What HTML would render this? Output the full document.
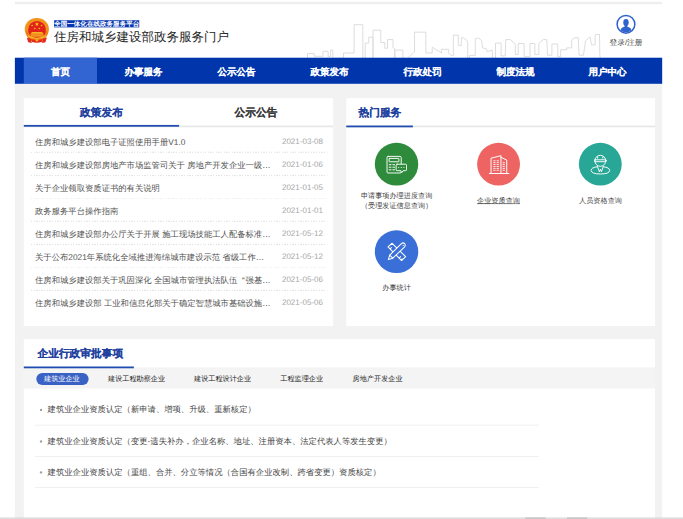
<!DOCTYPE html>
<html><head><meta charset="utf-8">
<style>
*{margin:0;padding:0;box-sizing:border-box}
html,body{width:683px;height:519px;overflow:hidden;background:#fff;font-family:"Liberation Sans",sans-serif;text-rendering:geometricPrecision}
.a{position:absolute}
#topbar{left:25.212px;top:3.362px;width:1087.49px;height:3.362px;background:#eeeeee}
#label{left:90.764px;top:33.616px;width:143.71px;height:12.438px;background:#0636b0;color:#fff;font-size:11px;line-height:12.942px;font-weight:bold;letter-spacing:0.067px;white-space:nowrap;text-align:center;letter-spacing:0}
#title{left:90.764px;top:50.425px;font-size:21px;line-height:26.893px;color:#262626;white-space:nowrap}
#login{left:1016.896px;top:62.863px;width:70.594px;text-align:center;font-size:13px;line-height:15.127px;color:#444;white-space:nowrap}
#nav{left:25.212px;top:97.488px;width:1087.49px;height:43.701px;background:#0035ac}
#nav .it{position:absolute;top:0;height:43.701px;line-height:49.08px;color:#fff;font-weight:bold;-webkit-text-stroke:0.168px #fff;font-size:16px;white-space:nowrap;text-align:center}
#nav .act{background:#3264d2}
#body{left:25.212px;top:141.189px;width:1087.49px;height:729.476px;background:#f2f2f2}
.panel{background:#fff}
.tabt{font-size:18px;font-weight:bold;-webkit-text-stroke:0.202px currentColor;white-space:nowrap;line-height:23.531px}
.row{position:absolute;left:58.829px;width:490.799px;height:38.659px;font-size:14px;line-height:42.357px;color:#505050;white-space:nowrap}
.row .t{position:absolute;left:0;top:0}
.q{display:inline-block;width:14.001px;text-align:right;padding-right:1.345px}
.row .d{position:absolute;right:6.723px;top:-0.336px;color:#a8a8a8;font-size:13.5px}
.dash{position:absolute;left:52.105px;width:497.523px;height:1.681px;background:repeating-linear-gradient(90deg,#e4e4e4 0 2.219px,transparent 2.219px 4.437px)}
.circ{position:absolute;width:72.275px;height:72.275px;border-radius:50%}
.lab{position:absolute;width:171.444px;text-align:center;font-size:12px;line-height:16.808px;color:#3a3a3a;white-space:nowrap}
.sub{position:absolute;top:621.063px;height:33.616px;line-height:33.616px;font-size:12px;color:#222;white-space:nowrap}
.brow{position:absolute;left:58.829px;width:847.133px;height:52.946px;font-size:14px;line-height:52.946px;color:#444;white-space:nowrap;padding-left:21.178px;border-bottom:1.681px solid #e6e6e6}
.brow:before{content:"";position:absolute;left:8.404px;top:24.54px;width:4.034px;height:4.034px;border-radius:50%;background:#a0a0a0}
#bline{left:0;top:869.992px;width:1148px;height:2.353px;background:#c8cac8}
</style></head><body>
<div id="page" style="position:absolute;left:0;top:0;width:1148.000px;height:872.346px;transform:scale(0.594948);transform-origin:0 0;overflow:hidden">
<div class="a" id="topbar"></div>
<!-- emblem -->
<svg class="a" style="left:33.616px;top:23.531px;width:57.148px;height:57.148px" viewBox="20 14 34 34">
  <ellipse cx="36.6" cy="29" rx="12.1" ry="11.2" fill="#f2941c"/>
  <path d="M25.5 31 Q26 38 31 40.5 L36.6 41 L42.2 40.5 Q47.2 38 47.7 31 Z" fill="#ef7d18"/>
  <circle cx="36.8" cy="29.6" r="8.9" fill="#e2231a"/>
  <path d="M31.6 31.6H42L42.8 33.2H30.8Z" fill="#f6b623"/>
  <rect x="30.4" y="33" width="12.8" height="3.4" fill="#f6b623"/>
  <path d="M30.6 34.2H43M30.6 35.5H43" stroke="#e6531c" stroke-width="0.45"/>
  <path d="M27.6 35.6Q36.7 40.6 45.8 35.6" fill="none" stroke="#f6b623" stroke-width="1.3"/>
  <path d="M26.6 37.4L30.6 38.4L31.6 42.6L28 42Z" fill="#e42a1c"/>
  <path d="M46.6 37.4L42.6 38.4L41.6 42.6L45.2 42Z" fill="#e42a1c"/>
  <path d="M30.8 38.6Q36.7 40.6 42.4 38.6L41.6 41.8Q36.7 43 31.8 41.8Z" fill="#e42a1c"/>
  <circle cx="36.7" cy="40" r="1.3" fill="#f4b21e"/>
  <polygon points="36.7,21.8 37.25,23.3 38.8,23.3 37.55,24.2 38.05,25.7 36.7,24.8 35.35,25.7 35.85,24.2 34.6,23.3 36.15,23.3" fill="#ffd51c"/>
  <circle cx="31.9" cy="25.2" r="0.75" fill="#ffd51c"/>
  <circle cx="41.3" cy="25.2" r="0.75" fill="#ffd51c"/>
  <circle cx="34.6" cy="28.1" r="0.75" fill="#ffd51c"/>
  <circle cx="39" cy="28.1" r="0.75" fill="#ffd51c"/>
</svg>
<div class="a" id="label">全国一体化在线政务服务平台</div>
<div class="a" id="title">住房和城乡建设部政务服务门户</div>
<!-- skyline -->
<svg class="a" style="left:470.63px;top:25.212px;width:554.671px;height:73.956px" viewBox="280 15 330 44">
<polyline fill="none" stroke="#d9d9d9" stroke-width="0.9" points="307.3,58.5 307.3,53.7 314,53.7 314,56.4 322.8,56.4 322.8,51.4 327.9,51.4 327.9,56.6 330.4,56.6 330.4,50.2 332.6,50.2 332.6,58.5 343.3,58.5 343.3,53.1 353.9,53.1 353.9,24.8 362.6,24.8 362.6,58.5 365,58.5 365,43.2 368.5,43.2 368.5,37.3 372.8,37.3 372.8,58.5 372.8,30.3 380.5,30.3 380.5,42.6 384.6,42.6 384.6,48.4 387.3,48.4 387.3,39.7 392.8,39.7 392.8,47.9 394.6,49 394.6,58.5 394.6,50.2 402.6,50.2 402.6,58.5 407.5,58.5 414.3,52 414.3,32.3 425.6,32.3 425.6,53.1 432,53.1 432,47.3 441.4,53.1 441.2,49.4 448.2,49.4 448.2,53.1 451.1,55.5 453.1,55.5 453.1,35.3 458.1,35.3 458.1,45.5 461.1,45.5 461.1,37.9 463.4,37.9 467.5,41.4 467.5,58.5 469.2,58.5 469.2,55.5 475.1,55.5 475.1,38.5 478.6,38.5 481.6,40.8 482.2,47.9 486.3,49 486.8,52 492.1,50.2 492.1,58.5 495.3,58.5 495.3,43.2 500.9,43.2 500.9,56 505,56 505.6,39.7 510.3,39.7 515.1,44.4 515.1,54.6 518,54.6 518,43.6 523.9,43.6 523.9,56.8 529.8,56.8 529.8,43.6 534.6,43.6 534.6,54.6 538.6,54.6 538.6,43.6 543,39.7 546.6,39.7 547.3,55.3 551.7,55.3 551.7,44.1 557.6,44.1 557.6,56.8 560.5,56.8 560.5,49.9 566.4,49.9 566.4,48 571.5,48 571.5,40 574.4,37.8 578.1,37.8 578.8,55.3 583.2,55.3 585.4,40.7 589.8,37 591.3,45 594.9,45 594.9,34.8 599.3,34.4 599.6,54.6 600,58.5"/>
</svg>
<!-- login icon -->
<svg class="a" style="left:1035.385px;top:21.851px;width:33.616px;height:36.978px" viewBox="0 0 20 22">
  <defs><clipPath id="cp"><circle cx="10.2" cy="11.2" r="8.2"/></clipPath></defs>
  <circle cx="10.2" cy="11.2" r="8.9" fill="none" stroke="#2f62cc" stroke-width="1.5"/>
  <g clip-path="url(#cp)" fill="#2f62cc">
    <ellipse cx="10.2" cy="9.3" rx="2.7" ry="3.5"/>
    <rect x="8.9" y="11" width="2.6" height="3"/>
    <path d="M3.5 21 Q4.2 14.6 8.4 13.6 L12 13.6 Q16.2 14.6 16.9 21 Z"/>
  </g>
</svg>
<div class="a" id="login">登录/注册</div>
<div class="a" id="nav">
  <div class="it act" style="left:15.127px;width:122.7px">首页</div>
  <div class="it" style="left:137.827px;width:156.316px">办事服务</div>
  <div class="it" style="left:294.143px;width:156.316px">公示公告</div>
  <div class="it" style="left:450.46px;width:156.316px">政策发布</div>
  <div class="it" style="left:606.776px;width:156.316px">行政处罚</div>
  <div class="it" style="left:763.092px;width:156.316px">制度法规</div>
  <div class="it" style="left:917.728px;width:156.316px">用户中心</div>
</div>
<div class="a" id="body"></div>
<!-- left panel -->
<div class="a panel" style="left:40.34px;top:164.72px;width:519.373px;height:383.227px"></div>
<div class="a tabt" style="left:40.34px;top:178.167px;width:260.527px;text-align:center;color:#1d3f9e">政策发布</div>
<div class="a tabt" style="left:300.867px;top:178.167px;width:258.846px;text-align:center;color:#3a3a3a">公示公告</div>
<div class="a" style="left:40.34px;top:211.447px;width:519.373px;height:2.353px;background:#e8e8e8"></div>
<div class="a" style="left:40.34px;top:210.102px;width:260.527px;height:3.362px;background:#1f4db0"></div>
<div class="row" style="top:217.666px"><span class="t">住房和城乡建设部电子证照使用手册V1.0</span><span class="d">2021-03-08</span></div>
<div class="dash" style="top:255.485px"></div>
<div class="row" style="top:256.325px"><span class="t">住房和城乡建设部房地产市场监管司关于 房地产开发企业一级…</span><span class="d">2021-01-06</span></div>
<div class="dash" style="top:294.143px"></div>
<div class="row" style="top:294.984px"><span class="t">关于企业领取资质证书的有关说明</span><span class="d">2021-01-05</span></div>
<div class="dash" style="top:332.802px"></div>
<div class="row" style="top:333.643px"><span class="t">政务服务平台操作指南</span><span class="d">2021-01-01</span></div>
<div class="dash" style="top:371.461px"></div>
<div class="row" style="top:372.302px"><span class="t">住房和城乡建设部办公厅关于开展 施工现场技能工人配备标准…</span><span class="d">2021-05-12</span></div>
<div class="dash" style="top:410.12px"></div>
<div class="row" style="top:410.96px"><span class="t">关于公布2021年系统化全域推进海绵城市建设示范 省级工作…</span><span class="d">2021-05-12</span></div>
<div class="dash" style="top:448.779px"></div>
<div class="row" style="top:449.619px"><span class="t">住房和城乡建设部关于巩固深化 全国城市管理执法队伍<span class="q">“</span>强基…</span><span class="d">2021-05-06</span></div>
<div class="dash" style="top:487.438px"></div>
<div class="row" style="top:488.278px"><span class="t">住房和城乡建设部 工业和信息化部关于确定智慧城市基础设施…</span><span class="d">2021-05-06</span></div>
<!-- right panel -->
<div class="a panel" style="left:581.564px;top:164.72px;width:519.373px;height:383.227px"></div>
<div class="a tabt" style="left:602.574px;top:178.167px;color:#1d3f9e">热门服务</div>
<div class="a" style="left:581.564px;top:211.447px;width:519.373px;height:2.353px;background:#e8e8e8"></div>
<div class="a" style="left:581.564px;top:210.943px;width:112.615px;height:3.362px;background:#1f4db0"></div>
<div class="circ" style="left:630.476px;top:240.021px;background:#2e8b3b"></div>
<div class="circ" style="left:801.751px;top:240.189px;background:#ee6463"></div>
<div class="circ" style="left:973.195px;top:240.189px;background:#28a797"></div>
<div class="circ" style="left:630.476px;top:386.757px;background:#3a6fd8"></div>
<svg class="a" style="left:630.307px;top:238.676px;width:73.956px;height:73.956px" viewBox="375 142 44 44">
 <g fill="none" stroke="#fff" stroke-width="0.95" stroke-linecap="round">
  <rect x="387.2" y="156.2" width="14.2" height="16.6" rx="1.1"/>
  <rect x="389.3" y="158.2" width="9.8" height="3.4" rx="0.4"/>
  <path d="M389.4 164.5H391.2M393 164.5H394.8M389.4 167H391.2M393 167H394.8M389.4 169.6H391.2M393 169.6H394.8"/>
  <path d="M397.3 164H405.7Q406.7 164 406.7 165V169.5Q406.7 170.5 405.7 170.5H403.2L402 172.4L401 170.5H397.3Q396.3 170.5 396.3 169.5V165Q396.3 164 397.3 164Z" fill="#2e8b3b"/>
 </g>
 <g fill="#fff"><circle cx="398.9" cy="167.3" r="0.55"/><circle cx="401.5" cy="167.3" r="0.55"/><circle cx="404.1" cy="167.3" r="0.55"/></g>
</svg>
<svg class="a" style="left:801.751px;top:238.676px;width:73.956px;height:73.956px" viewBox="477 142 44 44">
 <g fill="none" stroke="#fff" stroke-width="1" stroke-linecap="round" stroke-linejoin="round">
  <path d="M490.9 173.3V158L500.8 155.5V173.3M500.8 157.1L506.6 159.9V173.3M489.2 173.3H508.7"/>
  <path stroke-width="0.9" d="M493.6 160.6H495M496.9 160.6H498.3M493.6 162.5H495M496.9 162.5H498.3M493.6 164.4H495M496.9 164.4H498.3M493.6 166.3H495M496.9 166.3H498.3M493.6 168.2H495M496.9 168.2H498.3M493.6 170.1H495M496.9 170.1H498.3M502.9 162.5H504.3M502.9 164.4H504.3M502.9 166.3H504.3M502.9 168.2H504.3M502.9 170.1H504.3"/>
 </g>
</svg>
<svg class="a" style="left:973.195px;top:238.676px;width:73.956px;height:73.956px" viewBox="579 142 44 44">
 <g fill="none" stroke="#fff" stroke-width="0.95" stroke-linecap="round" stroke-linejoin="round">
  <circle cx="600.5" cy="160.6" r="5.5"/>
  <rect x="594.8" y="159.6" width="11.4" height="1.9" rx="0.4"/>
  <path d="M597.8 156.6V158M602.9 156.6V158"/>
  <path d="M597.6 166.5Q591.2 167.3 591.2 170.2Q591.5 173.8 600.5 173.8Q609.5 173.8 609.8 170.2Q609.8 167.3 603.4 166.5"/>
  <path d="M597.6 166.5L599.5 171.6L600.5 169L601.5 171.6L603.4 166.5"/>
 </g>
</svg>
<svg class="a" style="left:630.307px;top:384.908px;width:73.956px;height:73.956px" viewBox="375 229 44 44">
 <g fill="none" stroke="#fff" stroke-width="1.05" stroke-linejoin="round" stroke-linecap="round">
  <path d="M388.2 246.9L392.3 243.2L405.8 256.6L401.8 260.5Z"/>
  <path d="M390.5 248.6L391.6 247.5M399.6 257.7L400.7 256.6M401.6 259.6L402.3 258.9"/>
  <path d="M401.6 243.6L389.9 255L388.5 259.5L393 258.1L404.8 246.8A2.25 2.25 0 0 0 401.6 243.6Z" fill="#3a6fd8"/>
  <path d="M389.9 255L393 258.1"/>
 </g>
 <circle cx="403.4" cy="245.4" r="0.6" fill="#fff"/>
</svg>
<div class="lab" style="left:580.891px;top:320.196px">申请事项办理进度查询<br>（受理发证信息查询）</div>
<div class="lab" style="left:752.167px;top:328.6px"><u>企业资质查询</u></div>
<div class="lab" style="left:923.611px;top:328.6px">人员资格查询</div>
<div class="lab" style="left:580.891px;top:475.336px">办事统计</div>
<!-- bottom panel -->
<div class="a panel" style="left:40.34px;top:569.798px;width:1060.597px;height:302.548px"></div>
<div class="a tabt" style="left:63.031px;top:583.245px;color:#1d3f9e">企业行政审批事项</div>
<div class="a" style="left:40.34px;top:618.542px;width:1060.597px;height:34.457px;background:#f4f4f4"></div>
<div class="a" style="left:40.34px;top:617.533px;width:1060.597px;height:1.681px;background:#e8e8e8"></div>
<div class="a" style="left:40.34px;top:616.02px;width:184.89px;height:3.362px;background:#1f4db0"></div>
<div class="a" style="left:60.51px;top:626.946px;width:88.243px;height:20.17px;border-radius:10.085px;background:#3a62c4"></div>
<div class="sub" style="left:73.956px;color:#fff">建筑业企业</div>
<div class="sub" style="left:181.529px">建设工程勘察企业</div>
<div class="sub" style="left:326.079px">建设工程设计企业</div>
<div class="sub" style="left:471.134px">工程监理企业</div>
<div class="sub" style="left:592.657px">房地产开发企业</div>
<div class="brow" style="top:662.243px">建筑业企业资质认定（新申请、增项、升级、重新核定）</div>
<div class="brow" style="top:715.189px">建筑业企业资质认定（变更-遗失补办，企业名称、地址、注册资本、法定代表人等发生变更）</div>
<div class="brow" style="top:767.294px">建筑业企业资质认定（重组、合并、分立等情况（合国有企业改制、跨省变更）资质核定）</div>
<div class="a" id="bline"></div>
<div class="a" style="left:883.271px;top:870.329px;width:33.616px;height:2.017px;background:#b4b6b4"></div>
<div class="a" style="left:953.025px;top:870.329px;width:33.616px;height:2.017px;background:#b4b6b4"></div>

</div>
</body></html>
